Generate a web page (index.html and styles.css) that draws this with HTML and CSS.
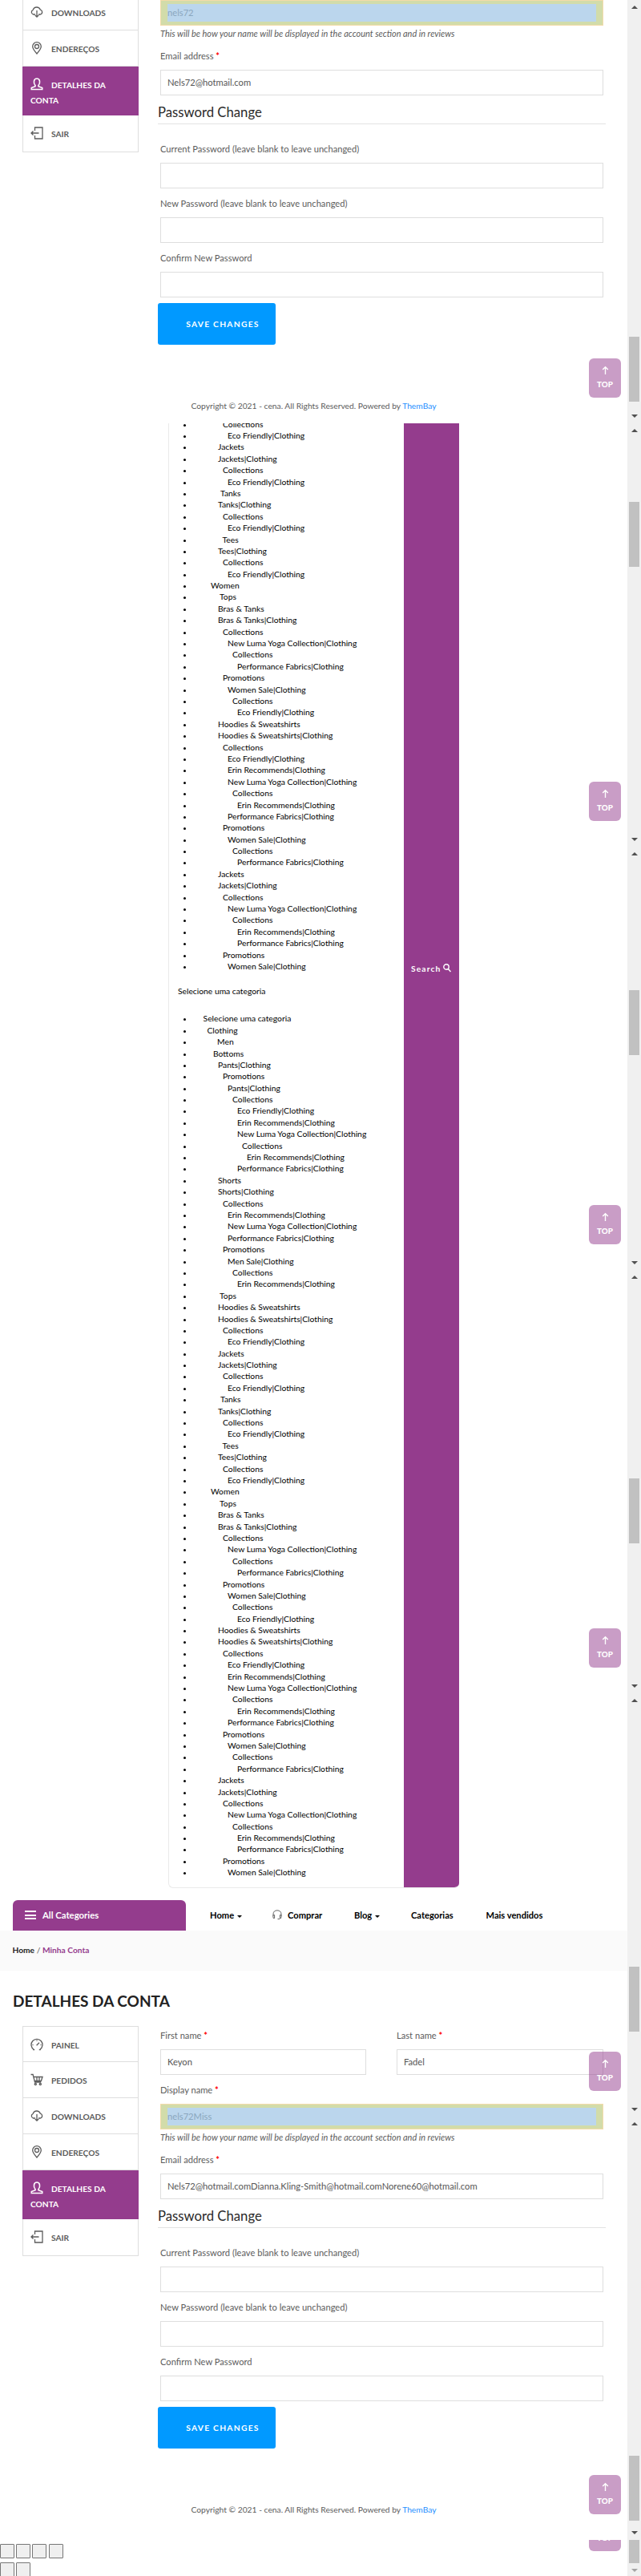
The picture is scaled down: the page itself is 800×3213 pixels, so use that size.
FILE: index.html
```html
<!DOCTYPE html>
<html lang="pt">
<head>
<meta charset="utf-8">
<title>Minha Conta</title>
<link rel="stylesheet" href="styles.css">
</head>
<body>
<svg class="defs">
  <symbol id="gauge" viewBox="0 0 16 16"><path d="M4.2 14.2A7 7 0 1 1 11.8 14.2M3.2 14.6h2M10.8 14.6h2M7.6 9.2L11 5.8M2.5 8.5h1M12.5 8.5h1M8 2.8v1"/></symbol>
  <symbol id="cart" viewBox="0 0 16 16"><path d="M.5 1.5h2.6l2.4 9.5h7.700M4 4.500h11l-1.600 5H5.200M8 4.500v5M11 4.500v5"/><circle cx="6.300" cy="13.500" r="1.100"/><circle cx="12.300" cy="13.500" r="1.100"/></symbol>
  <symbol id="cloud" viewBox="0 0 16 16"><path d="M6 11H3.6A3 3 0 0 1 3.200 5.300A4.800 4.800 0 0 1 12.300 5.200A3 3 0 0 1 12.500 11H10M8 6v8M5.800 12L8 14.200L10.200 12"/></symbol>
  <symbol id="pin" viewBox="0 0 16 16"><path d="M8 15C5 11.500 2.700 8.500 2.700 6a5.300 5.300 0 0 1 10.600 0C13.300 8.500 11 11.500 8 15z"/><circle cx="8" cy="6" r="2.500"/></symbol>
  <symbol id="user" viewBox="0 0 16 16"><path d="M6 9.500C3.300 6.500 4 1 8 1s4.700 5.500 2 8.500v1.300l4.700 1.700v2H1.300v-2L6 10.800z"/></symbol>
  <symbol id="exit" viewBox="0 0 16 16"><path d="M5.500 5V1h9.500v14H5.500v-4M1 8h9.500M3.500 5.500L1 8l2.500 2.500"/></symbol>
  <symbol id="up" viewBox="0 0 10 12"><path d="M5 11.500V1.500M1.300 5L5 1.300L8.700 5"/></symbol>
</svg>
<div class="page">
<main class="content">

<section class="capture">
  <div class="account">
    <ul class="menu menu-cut">
      <li><svg><use href="#cloud"/></svg>DOWNLOADS</li>
      <li><svg><use href="#pin"/></svg>ENDEREÇOS</li>
      <li class="active"><svg><use href="#user"/></svg>DETALHES DA CONTA</li>
      <li><svg><use href="#exit"/></svg>SAIR</li>
    </ul>
    <form class="form">
      <div class="input marked"><span>nels72</span></div>
      <em class="note">This will be how your name will be displayed in the account section and in reviews</em>
      <label>Email address <b>*</b></label>
      <div class="input">Nels72@hotmail.com</div>
      <h3>Password Change</h3>
      <label>Current Password (leave blank to leave unchanged)</label>
      <div class="input"></div>
      <label class="gap">New Password (leave blank to leave unchanged)</label>
      <div class="input"></div>
      <label class="gap">Confirm New Password</label>
      <div class="input"></div>
      <button type="button" class="save">SAVE CHANGES</button>
    </form>
  </div>
  <footer>Copyright © 2021 - cena. All Rights Reserved. Powered by <a>ThemBay</a></footer>
</section>

<section class="search">
  <div class="lists">
    <ul class="cats cats-cut">
      <li class="l4">Collections</li>
      <li class="l5">Eco Friendly|Clothing</li>
      <li class="l3">Jackets</li>
      <li class="l3">Jackets|Clothing</li>
      <li class="l4">Collections</li>
      <li class="l5">Eco Friendly|Clothing</li>
      <li class="tanks">Tanks</li>
      <li class="l3">Tanks|Clothing</li>
      <li class="l4">Collections</li>
      <li class="l5">Eco Friendly|Clothing</li>
      <li class="tees">Tees</li>
      <li class="l3">Tees|Clothing</li>
      <li class="l4">Collections</li>
      <li class="l5">Eco Friendly|Clothing</li>
      <li class="women">Women</li>
      <li class="tops">Tops</li>
      <li class="l3">Bras &amp; Tanks</li>
      <li class="l3">Bras &amp; Tanks|Clothing</li>
      <li class="l4">Collections</li>
      <li class="l5">New Luma Yoga Collection|Clothing</li>
      <li class="l6">Collections</li>
      <li class="l7">Performance Fabrics|Clothing</li>
      <li class="l4">Promotions</li>
      <li class="l5">Women Sale|Clothing</li>
      <li class="l6">Collections</li>
      <li class="l7">Eco Friendly|Clothing</li>
      <li class="l3">Hoodies &amp; Sweatshirts</li>
      <li class="l3">Hoodies &amp; Sweatshirts|Clothing</li>
      <li class="l4">Collections</li>
      <li class="l5">Eco Friendly|Clothing</li>
      <li class="l5">Erin Recommends|Clothing</li>
      <li class="l5">New Luma Yoga Collection|Clothing</li>
      <li class="l6">Collections</li>
      <li class="l7">Erin Recommends|Clothing</li>
      <li class="l5">Performance Fabrics|Clothing</li>
      <li class="l4">Promotions</li>
      <li class="l5">Women Sale|Clothing</li>
      <li class="l6">Collections</li>
      <li class="l7">Performance Fabrics|Clothing</li>
      <li class="l3">Jackets</li>
      <li class="l3">Jackets|Clothing</li>
      <li class="l4">Collections</li>
      <li class="l5">New Luma Yoga Collection|Clothing</li>
      <li class="l6">Collections</li>
      <li class="l7">Erin Recommends|Clothing</li>
      <li class="l7">Performance Fabrics|Clothing</li>
      <li class="l4">Promotions</li>
      <li class="l5">Women Sale|Clothing</li>
    </ul>
    <p>Selecione uma categoria</p>
    <ul class="cats">
      <li class="l0">Selecione uma categoria</li>
      <li class="l1">Clothing</li>
      <li class="men">Men</li>
      <li class="l2">Bottoms</li>
      <li class="l3">Pants|Clothing</li>
      <li class="l4">Promotions</li>
      <li class="l5">Pants|Clothing</li>
      <li class="l6">Collections</li>
      <li class="l7">Eco Friendly|Clothing</li>
      <li class="l7">Erin Recommends|Clothing</li>
      <li class="l7">New Luma Yoga Collection|Clothing</li>
      <li class="l8">Collections</li>
      <li class="l9">Erin Recommends|Clothing</li>
      <li class="l7">Performance Fabrics|Clothing</li>
      <li class="l3">Shorts</li>
      <li class="l3">Shorts|Clothing</li>
      <li class="l4">Collections</li>
      <li class="l5">Erin Recommends|Clothing</li>
      <li class="l5">New Luma Yoga Collection|Clothing</li>
      <li class="l5">Performance Fabrics|Clothing</li>
      <li class="l4">Promotions</li>
      <li class="l5">Men Sale|Clothing</li>
      <li class="l6">Collections</li>
      <li class="l7">Erin Recommends|Clothing</li>
      <li class="tops">Tops</li>
      <li class="l3">Hoodies &amp; Sweatshirts</li>
      <li class="l3">Hoodies &amp; Sweatshirts|Clothing</li>
      <li class="l4">Collections</li>
      <li class="l5">Eco Friendly|Clothing</li>
      <li class="l3">Jackets</li>
      <li class="l3">Jackets|Clothing</li>
      <li class="l4">Collections</li>
      <li class="l5">Eco Friendly|Clothing</li>
      <li class="tanks">Tanks</li>
      <li class="l3">Tanks|Clothing</li>
      <li class="l4">Collections</li>
      <li class="l5">Eco Friendly|Clothing</li>
      <li class="tees">Tees</li>
      <li class="l3">Tees|Clothing</li>
      <li class="l4">Collections</li>
      <li class="l5">Eco Friendly|Clothing</li>
      <li class="women">Women</li>
      <li class="tops">Tops</li>
      <li class="l3">Bras &amp; Tanks</li>
      <li class="l3">Bras &amp; Tanks|Clothing</li>
      <li class="l4">Collections</li>
      <li class="l5">New Luma Yoga Collection|Clothing</li>
      <li class="l6">Collections</li>
      <li class="l7">Performance Fabrics|Clothing</li>
      <li class="l4">Promotions</li>
      <li class="l5">Women Sale|Clothing</li>
      <li class="l6">Collections</li>
      <li class="l7">Eco Friendly|Clothing</li>
      <li class="l3">Hoodies &amp; Sweatshirts</li>
      <li class="l3">Hoodies &amp; Sweatshirts|Clothing</li>
      <li class="l4">Collections</li>
      <li class="l5">Eco Friendly|Clothing</li>
      <li class="l5">Erin Recommends|Clothing</li>
      <li class="l5">New Luma Yoga Collection|Clothing</li>
      <li class="l6">Collections</li>
      <li class="l7">Erin Recommends|Clothing</li>
      <li class="l5">Performance Fabrics|Clothing</li>
      <li class="l4">Promotions</li>
      <li class="l5">Women Sale|Clothing</li>
      <li class="l6">Collections</li>
      <li class="l7">Performance Fabrics|Clothing</li>
      <li class="l3">Jackets</li>
      <li class="l3">Jackets|Clothing</li>
      <li class="l4">Collections</li>
      <li class="l5">New Luma Yoga Collection|Clothing</li>
      <li class="l6">Collections</li>
      <li class="l7">Erin Recommends|Clothing</li>
      <li class="l7">Performance Fabrics|Clothing</li>
      <li class="l4">Promotions</li>
      <li class="l5">Women Sale|Clothing</li>
    </ul>
  </div>
  <div class="search-btn">Search<svg viewBox="0 0 10 11"><circle cx="4" cy="4" r="3.200"/><path d="M6.300 6.500L9.500 10"/></svg></div>
</section>

<nav class="nav">
  <div class="all"><i class="burger"></i>All Categories</div>
  <span class="n1">Home<i class="caret"></i></span>
  <span class="n2"><svg viewBox="0 0 12 12"><path d="M1 7.500V5.500C1 2.500 3 .8 6 .8s5 1.700 5 4.700v2M1 6.500h1.600v4H1.200L.8 8zM11 6.500H9.400v4h1.200l.6-2.500zM10 10.500L9 11.500H6.500"/></svg>Comprar</span>
  <span class="n3">Blog<i class="caret"></i></span>
  <span class="n4">Categorias</span>
  <span class="n5">Mais vendidos</span>
</nav>
<div class="crumbs"><strong>Home</strong> / <span>Minha Conta</span></div>

<section class="details">
  <h1>DETALHES DA CONTA</h1>
  <div class="account">
    <ul class="menu menu-full">
      <li><svg><use href="#gauge"/></svg>PAINEL</li>
      <li><svg><use href="#cart"/></svg>PEDIDOS</li>
      <li><svg><use href="#cloud"/></svg>DOWNLOADS</li>
      <li><svg><use href="#pin"/></svg>ENDEREÇOS</li>
      <li class="active"><svg><use href="#user"/></svg>DETALHES DA CONTA</li>
      <li><svg><use href="#exit"/></svg>SAIR</li>
    </ul>
    <form class="form">
      <div class="names">
        <div><label>First name <b>*</b></label><div class="input">Keyon</div></div>
        <div><label>Last name <b>*</b></label><div class="input">Fadel</div></div>
      </div>
      <label class="gap">Display name <b>*</b></label>
      <div class="input marked"><span>nels72Miss</span></div>
      <em class="note">This will be how your name will be displayed in the account section and in reviews</em>
      <label>Email address <b>*</b></label>
      <div class="input">Nels72@hotmail.comDianna.Kling-Smith@hotmail.comNorene60@hotmail.com</div>
      <h3>Password Change</h3>
      <label>Current Password (leave blank to leave unchanged)</label>
      <div class="input"></div>
      <label class="gap">New Password (leave blank to leave unchanged)</label>
      <div class="input"></div>
      <label class="gap">Confirm New Password</label>
      <div class="input"></div>
      <button type="button" class="save">SAVE CHANGES</button>
    </form>
  </div>
  <footer>Copyright © 2021 - cena. All Rights Reserved. Powered by <a>ThemBay</a></footer>
</section>
<div class="boxes">
  <div><i></i><i></i><i></i><i></i></div>
  <div><i></i><i></i></div>
</div>
</main>

<aside class="rail">
  <div class="track"><i class="up"></i><i class="thumb" style="margin-top:408px"></i><i class="down"></i><div class="top"><svg><use href="#up"/></svg>TOP</div></div>
  <div class="track"><i class="up"></i><i class="thumb" style="margin-top:86px"></i><i class="down"></i><div class="top"><svg><use href="#up"/></svg>TOP</div></div>
  <div class="track"><i class="up"></i><i class="thumb" style="margin-top:167px"></i><i class="down"></i><div class="top"><svg><use href="#up"/></svg>TOP</div></div>
  <div class="track"><i class="up"></i><i class="thumb" style="margin-top:248px"></i><i class="down"></i><div class="top"><svg><use href="#up"/></svg>TOP</div></div>
  <div class="track"><i class="up"></i><i class="thumb" style="margin-top:329px"></i><i class="down"></i><div class="top"><svg><use href="#up"/></svg>TOP</div></div>
  <div class="track"><i class="up"></i><i class="thumb" style="margin-top:411px"></i><i class="down"></i><div class="top"><svg><use href="#up"/></svg>TOP</div></div>
  <div class="track last"><i class="thumb"></i><i class="down"></i><div class="top"><svg><use href="#up"/></svg>TOP</div></div>
</aside>
</div>
</body>
</html>
```
FILE: styles.css
```css
* { box-sizing: border-box; }
body { margin: 0; background: #fff; font-family: Lato, "Open Sans", sans-serif; font-size: 10.3px; color: #5c5c5c; }
ul { margin: 0; padding: 0; }
i { font-style: normal; }
.defs { display: none; }
.page { display: flex; width: 800px; height: 3213px; overflow: hidden; }
.content { width: 783px; flex: none; }

.capture { height: 528px; overflow: hidden; }
.account { display: flex; padding-left: 28px; align-items: flex-start; }

.menu { width: 145px; list-style: none; border: 1px solid #dedede; border-bottom: 0; flex: none; }
.menu-cut { border-top: 0; margin-top: -7px; }
.menu-full { margin-top: 3px; }
.menu li { height: 45px; padding: 14px 9px 0; line-height: 19.3px; font-size: 10.2px; font-weight: bold; border-bottom: 1px solid #dedede; }
.menu-full li:first-child { height: 44px; }
.menu .active { height: 61px; margin: 0 -1px; padding-left: 10px; background: #943c8d; border-color: #943c8d; color: #fff; }
.menu li:last-child { height: 46px; }
.menu svg { width: 16px; height: 16px; margin: -5px 10px 0 0; vertical-align: middle; fill: none; stroke: currentColor; stroke-width: 1.3; }
.menu .active svg { stroke-width: 1.6; }

.form { width: 559px; margin-left: 24px; padding: 0 3px; display: flex; flex-direction: column; }
.form label { height: 32px; line-height: 30px; font-size: 11.15px; }
.form label b { color: #f00; }
.form .gap { margin-top: 4px; }
.input { height: 32px; padding: 0 8px; border: 1px solid #dedede; line-height: 30px; font-size: 11.2px; color: #555; }
.marked { padding: 4px 8px; background: #d2dcaa; border-color: #f3dba9; }
.marked span { display: block; height: 22px; line-height: 22px; background: #bbd6ed; color: #8ba7be; }
.note { height: 23px; line-height: 20px; font-size: 10.95px; }
.names { display: grid; grid-template-columns: 257px 258px; justify-content: space-between; }
.names > div { display: flex; flex-direction: column; }
.form h3 { margin: 7px -3px 16px; height: 29px; line-height: 28px; font-size: 16.7px; font-weight: 400; color: #2a2a2a; border-bottom: 1px solid #e3e3e3; }
.save { width: 147px; height: 52px; margin: 7px 0 0 -3px; padding: 0 0 1px 15px; border: 0; border-radius: 3px; background: #0199ff; color: #fff; font: bold 10.3px Lato, sans-serif; letter-spacing: 1.25px; }
footer { margin-top: 67px; line-height: 19px; text-align: center; font-size: 10.27px; }
footer a { color: #1e90ff; }

.search { display: flex; width: 363px; height: 1827px; margin-left: 210px; overflow: hidden; border: 1px solid #eaeaea; border-top: 0; border-right: 0; border-radius: 0 0 6px 6px; color: #000; }
.lists { width: 293px; }
.lists p { margin: 0 0 0 11px; height: 51px; line-height: 49px; }
.cats { padding-left: 31px; font-size: 10.34px; line-height: 14.4px; }
.cats-cut { margin-top: -6.4px; }
.cats li { height: 14.4px; white-space: nowrap; }
.l0 { padding-left: 11.6px; }
.l1 { padding-left: 16.4px; }
.l2 { padding-left: 24px; }
.l3 { padding-left: 30px; }
.l4 { padding-left: 36px; }
.l5 { padding-left: 42px; }
.l6 { padding-left: 48px; }
.l7 { padding-left: 54px; }
.l8 { padding-left: 60px; }
.l9 { padding-left: 66px; }
.men { padding-left: 29px; }
.women { padding-left: 21px; }
.tops { padding-left: 32px; }
.tanks { padding-left: 33px; }
.tees { padding-left: 35.5px; }
.search-btn { flex: 1; padding: 672px 0 0 9px; background: #943c8d; color: #fff; font-weight: bold; line-height: 16px; letter-spacing: 1.1px; white-space: nowrap; }
.search-btn svg { width: 10px; height: 11px; margin-left: 3px; vertical-align: -1px; fill: none; stroke: #fff; stroke-width: 1.4; }

.nav { display: flex; height: 53px; padding: 15px 0 0 16px; line-height: 38px; font-size: 11.15px; font-weight: bold; color: #000; white-space: nowrap; }
.all { display: flex; align-items: center; width: 216px; height: 38px; padding-left: 15px; background: #943c8d; border-radius: 6px 6px 0 0; color: #fff; font-size: 11.35px; }
.burger { width: 14px; height: 11px; margin: -1px 8px 0 0; border-top: 2px solid #fff; border-bottom: 2px solid #fff; display: flex; align-items: center; }
.burger::before { content: ""; width: 14px; height: 2px; background: #fff; }
.caret { display: inline-block; margin-left: 4px; border: 3px solid transparent; border-top-color: #000; border-bottom: 0; vertical-align: 1px; }
.n1 { width: 78px; margin-left: 30px; }
.n2 { width: 102px; }
.n2 svg { width: 12px; height: 12px; margin-right: 7px; vertical-align: -1px; fill: none; stroke: #555; stroke-width: .9; }
.n3 { width: 71px; }
.n4 { width: 93.5px; }

.crumbs { height: 50px; padding-left: 15.5px; background: #fafafa; line-height: 48px; }
.crumbs strong { color: #222; font-size: 10.2px; }
.crumbs span { color: #943c8d; font-size: 10.2px; font-weight: bold; }
.details { height: 710px; }
.details h1 { margin: 0 0 0 16px; height: 66px; line-height: 76px; font-size: 19px; color: #222; }

.boxes { display: flex; flex-direction: column; gap: 5px; padding-top: 5px; }
.boxes div { display: flex; gap: 2px; }
.boxes i { width: 18px; height: 18px; background: #efefef; border: 1px solid #767676; border-radius: 1px; }
.boxes i:nth-child(4) { margin-left: 1px; }

.rail { width: 17px; flex: none; background: #f0f0f0; }
.track { position: relative; display: flex; flex-direction: column; align-items: center; height: 528px; padding: 7px 0; }
.track .up { border: 4px solid transparent; border-top: 0; border-bottom: 4px solid #505050; margin-bottom: 1px; }
.track .down { margin-top: auto; border: 4px solid transparent; border-bottom: 0; border-top: 4px solid #505050; }
.thumb { width: 13px; height: 81px; background: #c1c1c1; }
.top { position: absolute; right: 25px; top: 447px; width: 40px; height: 49px; border-radius: 6px; background: rgba(148, 60, 141, .5); color: #fff; display: flex; flex-direction: column; align-items: center; padding-top: 9px; font-size: 9.8px; font-weight: 900; line-height: 12px; }
.top svg { width: 9px; height: 12px; margin-bottom: 5px; fill: none; stroke: #fff; stroke-width: 1.5; }
.last { height: 45px; padding: 0 0 5px; clip-path: inset(0 0 0 -60px); }
.last .thumb { height: 29px; }
.last .down { border-top-color: #a3a3a3; }
.last .top { top: -35px; }
```
